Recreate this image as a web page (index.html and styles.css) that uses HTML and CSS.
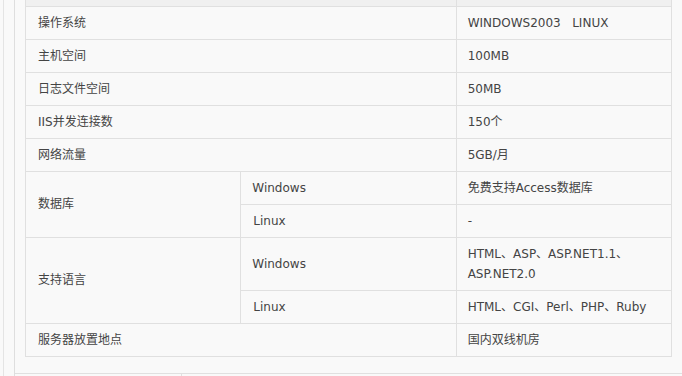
FILE: index.html
```html
<!DOCTYPE html>
<html lang="zh-CN">
<head>
    <meta charset="utf-8">
    <title>主机参数</title>
    <link rel="stylesheet" href="styles.css">
</head>
<body>
    <div class="page">
        <div class="panel">
            <table class="spec-table">
                <tr class="head-row">
                    <th colspan="2"></th>
                    <th></th>
                </tr>
                <tr>
                    <td colspan="2">操作系统</td>
                    <td>WINDOWS2003&nbsp;&nbsp;&nbsp;LINUX</td>
                </tr>
                <tr>
                    <td colspan="2">主机空间</td>
                    <td>100MB</td>
                </tr>
                <tr>
                    <td colspan="2">日志文件空间</td>
                    <td>50MB</td>
                </tr>
                <tr>
                    <td colspan="2">IIS并发连接数</td>
                    <td>150个</td>
                </tr>
                <tr>
                    <td colspan="2">网络流量</td>
                    <td>5GB/月</td>
                </tr>
                <tr>
                    <td rowspan="2">数据库</td>
                    <td>Windows</td>
                    <td>免费支持Access数据库</td>
                </tr>
                <tr>
                    <td>Linux</td>
                    <td>-</td>
                </tr>
                <tr>
                    <td rowspan="2">支持语言</td>
                    <td>Windows</td>
                    <td>HTML、ASP、ASP.NET1.1、<br>ASP.NET2.0</td>
                </tr>
                <tr>
                    <td>Linux</td>
                    <td>HTML、CGI、Perl、PHP、Ruby</td>
                </tr>
                <tr>
                    <td colspan="2">服务器放置地点</td>
                    <td>国内双线机房</td>
                </tr>
            </table>
            <div class="tab-bar">
                <div class="tab"></div>
                <div class="tab-rest"></div>
            </div>
        </div>
    </div>
</body>
</html>
```

FILE: styles.css
```css
* {
    margin: 0;
    padding: 0;
    box-sizing: border-box;
}

html, body {
    height: 100%;
    overflow: hidden;
}

body {
    background: #f9f9f9;
    font-family: "DejaVu Sans", "Noto Sans CJK SC", sans-serif;
    font-size: 12px;
    color: #444;
}

.page {
    margin-left: 3px;
    height: 100%;
    border-left: 1px solid #e4e4e4;
    padding-left: 10px;
}

.panel {
    height: 100%;
    border-left: 1px solid #dedede;
}

.spec-table {
    width: 647px;
    margin-left: 10px;
    border-collapse: collapse;
    table-layout: fixed;
}

.spec-table th,
.spec-table td {
    border: 1px solid #e0e0e0;
    padding: 6px 11px;
    line-height: 20px;
    text-align: left;
    vertical-align: middle;
    font-weight: normal;
}

.spec-table td:first-child {
    padding-left: 12px;
}

.head-row th {
    height: 6px;
    padding: 0;
    border-top: none;
    background: #f0f0f0;
}

.tab-bar {
    display: flex;
    margin-top: 16px;
    border-top: 1px solid #e0e0e0;
    height: 3px;
}

.tab {
    width: 167px;
    border-right: 1px solid #e0e0e0;
}

.tab-rest {
    flex: 1;
}
```
